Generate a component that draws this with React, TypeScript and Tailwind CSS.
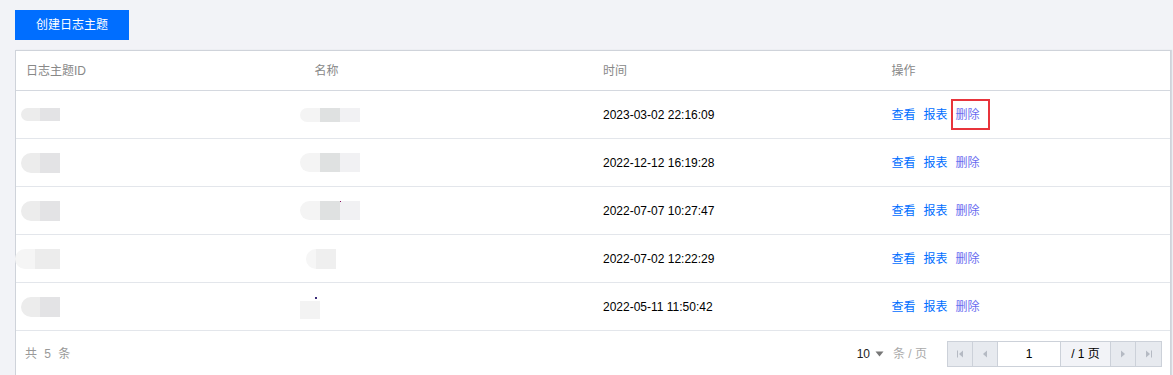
import React from 'react';

const rows = [
  { time: '2023-03-02 22:16:09', marked: true },
  { time: '2022-12-12 16:19:28', marked: false },
  { time: '2022-07-07 10:27:47', marked: false },
  { time: '2022-07-02 12:22:29', marked: false },
  { time: '2022-05-11 11:50:42', marked: false },
];

// blurred placeholders for the masked id / name values
const IdBlob = ({ i }: { i: number }) => {
  if (i === 3)
    return (
      <div className="flex ml-[-6px]">
        <span className="w-[20px] h-[20px] rounded-l-full bg-[#f5f5f5]" />
        <span className="w-[25px] h-[20px] bg-[#ececec]" />
      </div>
    );
  return (
    <div className="flex">
      <span className={`w-[19px] ${i === 0 ? 'h-[13px]' : 'h-[20px]'} rounded-l-full bg-[#ececec] blur-[0.5px]`} />
      <span className={`w-[20px] ${i === 0 ? 'h-[13px]' : 'h-[20px]'} bg-[#e3e3e5]`} />
    </div>
  );
};

const NameBlob = ({ i }: { i: number }) => {
  if (i === 3)
    return (
      <div className="flex ml-[6px]">
        <span className="w-[10px] h-[20px] rounded-l-full bg-[#f6f6f6]" />
        <span className="w-[20px] h-[20px] bg-[#efefef]" />
      </div>
    );
  if (i === 4)
    return (
      <div className="relative flex mt-[6px]">
        <span className="w-[20px] h-[18px] bg-[#f3f3f3]" />
        <span className="absolute left-[15px] top-[-4px] w-[2px] h-[2px] bg-[#3b2c7a]" />
      </div>
    );
  return (
    <div className="relative flex">
      <span className={`w-[20px] ${i === 0 ? 'h-[14px]' : 'h-[19px]'} rounded-l-full bg-[#f4f4f4]`} />
      <span className={`w-[20px] ${i === 0 ? 'h-[14px]' : 'h-[19px]'} bg-[#dfe1e1]`} />
      <span className={`w-[20px] ${i === 0 ? 'h-[14px]' : 'h-[19px]'} bg-[#f1f1f3]`} />
      {i === 2 && <span className="absolute left-[40px] top-[0px] w-[1px] h-[1px] bg-[#8a1060]" />}
    </div>
  );
};

const PageBtn = ({ children }: { children: React.ReactNode }) => (
  <div className="w-[25px] h-full flex items-center justify-center bg-[#e7eaef] border-r border-[#ccd1d9] text-[#b5bac3]">
    {children}
  </div>
);

export default function App() {
  return (
    <div
      className="w-[1173px] h-[375px] overflow-hidden bg-[#f2f3f7] pt-[10px] pl-[15px] text-[12px]"
      style={{ fontFamily: '"Liberation Sans", "Noto Sans CJK SC", sans-serif' }}
    >
      <button className="w-[114px] h-[30px] bg-[#006eff] text-white text-[12px]">创建日志主题</button>

      <div className="mt-[10px] w-[1156px] bg-white border border-[#cfd3da] shadow-[1px_0_1px_#d6d9df]">
        <div className="grid grid-cols-4 h-[40px] items-center border-b border-[#d4d8df] text-[#888]">
          <div className="pl-[10px]">日志主题ID</div>
          <div className="pl-[10px]">名称</div>
          <div className="pl-[10px]">时间</div>
          <div className="pl-[10px]">操作</div>
        </div>

        {rows.map((r, i) => (
          <div key={i} className="grid grid-cols-4 h-[48px] items-center border-b border-[#e3e6eb]">
            <div className="pl-[5px]">
              <IdBlob i={i} />
            </div>
            <div className="ml-[-5px]">
              <NameBlob i={i} />
            </div>
            <div className="pl-[10px] text-[#000]">{r.time}</div>
            <div className="pl-[10px] flex gap-[8px]">
              <span className="text-[#006eff]">查看</span>
              <span className="text-[#006eff]">报表</span>
              <span className="relative text-[#6a6cf0]">
                删除
                {r.marked && (
                  <span className="absolute left-[-5px] right-[-10px] top-[-7px] bottom-[-6px] border-2 border-[#e8343b]" />
                )}
              </span>
            </div>
          </div>
        ))}

        <div className="flex items-center h-[46px] pl-[9px] pr-[8px]">
          <span className="text-[#999] tracking-[2px]">共 5 条</span>
          <div className="ml-auto flex items-center">
            <span className="text-[#222]">10</span>
            <svg width="9" height="6" viewBox="0 0 9 6" className="ml-[5px]">
              <path d="M0.5 0.5 L8.5 0.5 L4.5 5.5 Z" fill="#777" />
            </svg>
            <span className="ml-[9px] text-[#aaa]">条 / 页</span>
            <div className="ml-[20px] flex h-[26px] border border-[#ccd1d9]">
              <PageBtn>
                <svg width="8" height="8" viewBox="0 0 8 8">
                  <rect x="1" y="0.5" width="1" height="7" fill="#b5bac3" />
                  <path d="M7 0.5 L3 4 L7 7.5 Z" fill="#b5bac3" />
                </svg>
              </PageBtn>
              <PageBtn>
                <svg width="6" height="8" viewBox="0 0 6 8">
                  <path d="M5 0.5 L1 4 L5 7.5 Z" fill="#b5bac3" />
                </svg>
              </PageBtn>
              <div className="w-[63px] flex items-center justify-center bg-white border-r border-[#ccd1d9] text-[#000]">1</div>
              <div className="w-[50px] flex items-center justify-center bg-[#f2f3f7] border-r border-[#ccd1d9] text-[#000]">/ 1 页</div>
              <PageBtn>
                <svg width="6" height="8" viewBox="0 0 6 8">
                  <path d="M1 0.5 L5 4 L1 7.5 Z" fill="#b5bac3" />
                </svg>
              </PageBtn>
              <div className="w-[25px] h-full flex items-center justify-center bg-[#e7eaef]">
                <svg width="8" height="8" viewBox="0 0 8 8">
                  <path d="M1 0.5 L5 4 L1 7.5 Z" fill="#b5bac3" />
                  <rect x="6" y="0.5" width="1" height="7" fill="#b5bac3" />
                </svg>
              </div>
            </div>
          </div>
        </div>
      </div>
    </div>
  );
}
